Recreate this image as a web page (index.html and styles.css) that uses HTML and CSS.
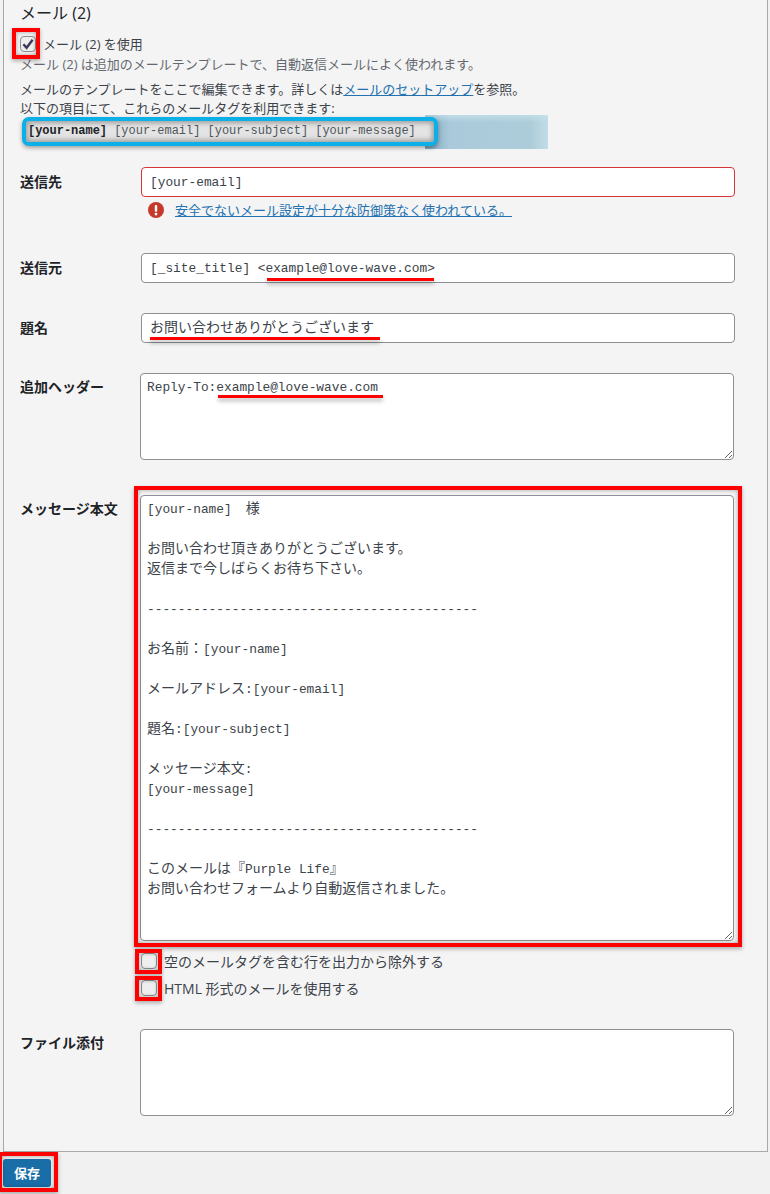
FILE: index.html
```html
<!DOCTYPE html>
<html lang="ja">
<head>
<meta charset="utf-8">
<title>メール (2)</title>
<link rel="stylesheet" href="styles.css">
</head>
<body>
<main class="panel">
  <h2 class="title">メール (2)</h2>
  <label class="check-row use-row">
    <span class="cb hl hl-cb">
      <svg class="tick" viewBox="0 0 16 16" width="16" height="16"><path d="M3.4 8.2 L6.6 11.8 L12.6 3.8" fill="none" stroke="#3c3a58" stroke-width="2.4"/></svg>
    </span>
    <span>メール (2) を使用</span>
  </label>
  <p class="desc">メール (2) は追加のメールテンプレートで、自動返信メールによく使われます。</p>
  <p class="intro">メールのテンプレートをここで編集できます。詳しくは<a href="#">メールのセットアップ</a>を参照。<br>以下の項目にて、これらのメールタグを利用できます:</p>
  <div class="tags">
    <span class="tag-fade"></span>
    <code class="tag-code"><b>[your-name]</b> [your-email] [your-subject] [your-message]</code>
  </div>

  <div class="row row-to">
    <label class="lbl">送信先</label>
    <div class="field">
      <input class="inp inp-error" value="[your-email]">
      <div class="warn">
        <svg class="warn-icon" viewBox="0 0 16 16" width="16" height="16"><circle cx="8" cy="8" r="8" fill="#c5392b"/><rect x="6.8" y="3" width="2.4" height="6.8" rx="1" fill="#fff"/><circle cx="8" cy="12.1" r="1.4" fill="#fff"/></svg>
        <a href="#">安全でないメール設定が十分な防御策なく使われている。</a>
      </div>
    </div>
  </div>

  <div class="row row-from">
    <label class="lbl">送信元</label>
    <div class="field">
      <input class="inp" value="[_site_title] &lt;example@love-wave.com&gt;">
      <span class="uline uline-from"></span>
    </div>
  </div>

  <div class="row row-gap">
    <label class="lbl">題名</label>
    <div class="field">
      <input class="inp inp-ja" value="お問い合わせありがとうございます">
      <span class="uline uline-subject"></span>
    </div>
  </div>

  <div class="row row-gap">
    <label class="lbl lbl-ta">追加ヘッダー</label>
    <div class="field">
      <textarea class="ta ta-small">Reply-To:example@love-wave.com</textarea>
      <span class="uline uline-reply"></span>
    </div>
  </div>

  <div class="row row-msg">
    <label class="lbl lbl-ta">メッセージ本文</label>
    <div class="field">
      <div class="hl hl-msg">
        <div class="ta ta-msg" role="textbox"><span>[your-name]</span><span class="ja">　様</span>

<span class="ja">お問い合わせ頂きありがとうございます。</span>
<span class="ja">返信まで今しばらくお待ち下さい。</span>

-------------------------------------------

<span class="ja">お名前：</span>[your-name]

<span class="ja">メールアドレス</span>:[your-email]

<span class="ja">題名</span>:[your-subject]

<span class="ja">メッセージ本文</span>:
[your-message]

-------------------------------------------

<span class="ja">このメールは『</span>Purple Life<span class="ja">』</span>
<span class="ja">お問い合わせフォームより自動返信されました。</span></div>
      </div>
      <label class="check-row opt-one">
        <span class="cb hl hl-cb2"></span>
        <span>空のメールタグを含む行を出力から除外する</span>
      </label>
      <label class="check-row opt-two">
        <span class="cb hl hl-cb2"></span>
        <span>HTML 形式のメールを使用する</span>
      </label>
    </div>
  </div>

  <div class="row row-file">
    <label class="lbl lbl-ta">ファイル添付</label>
    <div class="field">
      <textarea class="ta ta-small"></textarea>
    </div>
  </div>
</main>
<div class="actions">
  <button class="save hl hl-save" type="button">保存</button>
</div>
</body>
</html>
```

FILE: styles.css
```css
* { box-sizing: border-box; }

html, body { margin: 0; padding: 0; }

body {
  width: 770px;
  height: 1194px;
  overflow: hidden;
  background: #f1f1f1;
  color: #3c434a;
  font-family: "Open Sans", "Noto Sans CJK JP", sans-serif;
  font-size: 13px;
  line-height: 19px;
}

a { color: #2271b1; text-decoration: underline; }

.panel {
  width: 765px;
  height: 1152px;
  margin-left: 3px;
  padding: 0 0 0 16px;
  background: #f4f4f4;
  border: 1px solid #a9a9a9;
  border-top: 0;
}

.title {
  margin: 0;
  height: 26px;
  font-size: 16px;
  line-height: 26px;
  font-weight: 400;
  color: #1d2327;
}

.check-row { display: flex; align-items: center; }

.use-row { margin-top: 10px; height: 16px; gap: 7px; }

.cb {
  position: relative;
  flex: none;
  display: block;
  width: 16px;
  height: 16px;
  background: #eeeeee;
  border: 1px solid #8c8f94;
  border-radius: 4px;
}

.tick { position: absolute; left: -1px; top: -1px; }

.desc { margin: 3px 0 0; height: 19px; color: #646970; }

.intro { margin: 6px 0 0 0; height: 38px; color: #3c434a; }

.tags { position: relative; height: 29px; margin: -1px 0 0 2px; }

.tag-code {
  position: relative;
  display: block;
  width: 416px;
  height: 29px;
  padding: 0 0 0 2px;
  border: 4px solid #0cb0e8;
  border-radius: 7px;
  background: #e4e4e4;
  box-shadow: inset 0 0 5px 2px #9d9d9d, 0 2px 4px rgba(0, 0, 0, .35);
  font-family: "Liberation Mono", monospace;
  font-size: 12px;
  letter-spacing: -.02px;
  line-height: 21px;
  color: #50575e;
  white-space: nowrap;
}

.tag-code b { color: #1d2327; }

.tag-fade {
  position: absolute;
  left: 403px;
  top: -2px;
  width: 123px;
  height: 34px;
  background:
    linear-gradient(180deg, rgba(200, 228, 236, .7) 0, rgba(200, 228, 236, 0) 22%),
    linear-gradient(270deg, rgba(200, 228, 236, .7) 0, rgba(200, 228, 236, 0) 14%),
    linear-gradient(90deg, #7ba6bd 0, #aacadb 20%, #aecdda 100%);
}

.row {
  display: grid;
  grid-template-columns: 121px 594px;
}

.row-to { margin-top: 21px; height: 56px; }
.row-from { margin-top: 30px; }
.row-gap { margin-top: 30px; }
.row-msg { margin-top: 35px; }
.row-file { margin-top: 33px; }

.lbl {
  padding-top: 5px;
  font-size: 14px;
  line-height: 20px;
  font-weight: 700;
  color: #1d2327;
}

.lbl-ta { padding-top: 4px; }

.field { position: relative; }

.inp {
  display: block;
  width: 594px;
  height: 30px;
  margin: 0;
  padding: 0 8px;
  background: #fff;
  border: 1px solid #8c8f94;
  border-radius: 4px;
  outline: 0;
  font-family: "Liberation Mono", monospace;
  font-size: 12.83px;
  color: #3c434a;
}

.inp-ja {
  padding-bottom: 5px;
  font-family: "Noto Sans CJK JP", sans-serif;
  font-size: 14px;
}

.inp-error { border-color: #d63638; }

.warn {
  display: flex;
  align-items: center;
  gap: 11px;
  height: 20px;
  margin-top: 3px;
  padding-left: 7px;
}

.warn-icon { flex: none; }

.ta {
  display: block;
  width: 594px;
  margin: 0 0 0 -1px;
  padding: 4px 6px;
  background: #fff;
  border: 1px solid #8c8f94;
  border-radius: 4px;
  outline: 0;
  font-family: "Liberation Mono", monospace;
  font-size: 12.83px;
  line-height: 20px;
  color: #3c434a;
  resize: both;
}

.ta-small { height: 87px; }

.ta-msg {
  height: 446px;
  overflow: auto;
  white-space: pre-wrap;
}

.ja {
  font-family: "Noto Sans CJK JP", sans-serif;
  font-size: 14px;
  line-height: 14px;
}

.uline {
  position: absolute;
  height: 3px;
  background: #f00;
  box-shadow: 0 3px 4px rgba(0, 0, 0, .3);
}

.uline-from { left: 126px; width: 167px; top: 25px; }
.uline-subject { left: 9px; width: 230px; top: 24px; }
.uline-reply { left: 77px; width: 165px; top: 22px; }

.hl { position: relative; }

.hl::after {
  content: "";
  position: absolute;
  border: 4px solid #f00;
  box-shadow: 0 2px 4px rgba(0, 0, 0, .3), inset 0 0 4px rgba(0, 0, 0, .35);
  pointer-events: none;
}

.hl-cb::after { left: -9px; right: -5px; top: -9px; bottom: -8px; }

.hl-msg::after { left: -7px; right: -7px; top: -9px; bottom: -6px; }

.hl-cb2::after { left: -7px; right: -6px; top: -5px; bottom: -6px; }

.opt-one, .opt-two { gap: 7px; height: 16px; color: #3c434a; font-size: 14px; }
.opt-one { margin-top: 12px; }
.opt-two { margin-top: 11px; }

.actions { padding: 7px 0 0 3px; }

.save {
  display: block;
  width: 48px;
  height: 28px;
  padding: 0;
  background: #1a6ea8;
  color: #fff;
  border: 0;
  border-radius: 3px;
  font-family: "Noto Sans CJK JP", sans-serif;
  font-size: 13px;
  font-weight: 700;
  line-height: 28px;
}

.hl-save::after { left: -5px; right: -7px; top: -7px; bottom: -5px; }
```
